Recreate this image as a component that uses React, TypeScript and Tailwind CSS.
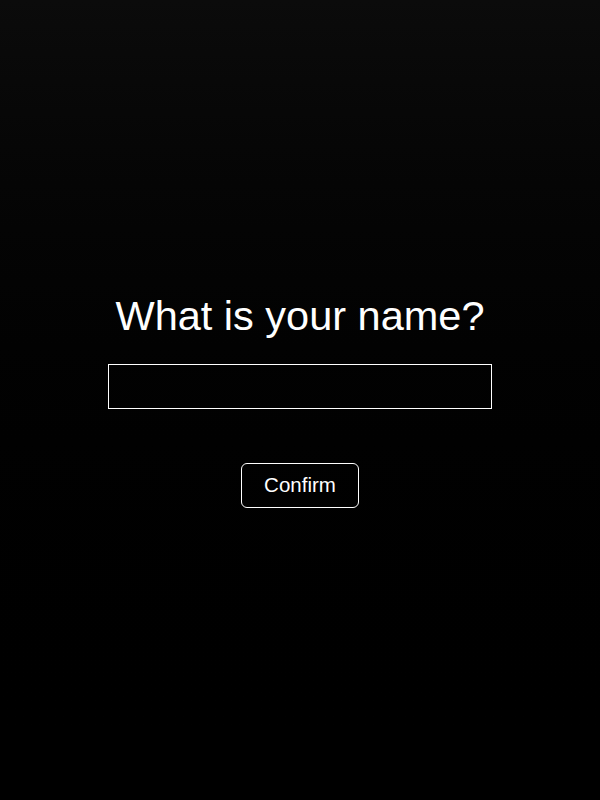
import React from "react";

export default function App() {
  return (
    <div
      className="h-[800px] w-full flex flex-col items-center justify-center bg-gradient-to-b from-[#0b0b0b] to-black text-white"
      style={{ fontFamily: '"Liberation Sans", Arial, sans-serif' }}
    >
      <h1 className="text-[41.5px] leading-[48px] font-normal">What is your name?</h1>
      <input
        type="text"
        className="mt-6 w-[384px] h-[45px] bg-transparent border border-white outline-none px-3 text-white text-xl"
      />
      <button className="mt-[54px] w-[118px] h-[45px] rounded-md border border-white text-[20.5px] text-white bg-transparent">
        Confirm
      </button>
    </div>
  );
}
